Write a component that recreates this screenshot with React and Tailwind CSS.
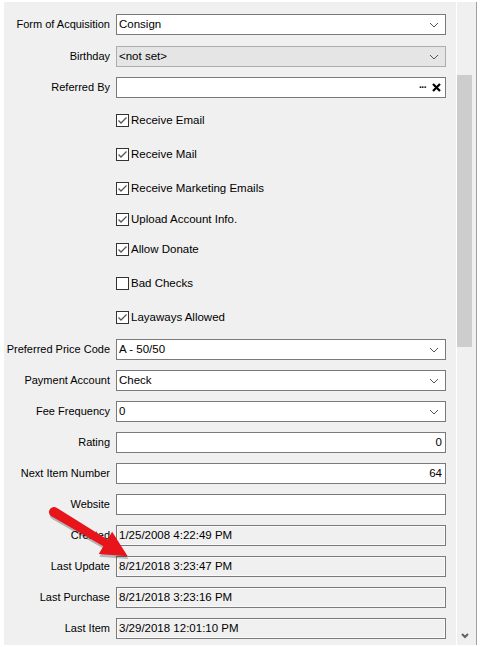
import React from "react";

const font = { fontFamily: '"Liberation Sans", Arial, sans-serif' };

function Chevron() {
  return (
    <svg width="10" height="6" viewBox="0 0 10 6" className="shrink-0">
      <path d="M1 1 L5 5 L9 1" fill="none" stroke="#555" strokeWidth="1" />
    </svg>
  );
}

function Label({ children }) {
  return (
    <div className="w-[107px] shrink-0 pr-[1px] text-right text-[11px] text-black leading-none whitespace-nowrap">
      {children}
    </div>
  );
}

function Row({ label, mt, children }) {
  return (
    <div className={`flex items-center h-[21px] gap-[5px] ${mt}`}>
      <Label>{label}</Label>
      {children}
    </div>
  );
}

function Select({ value, disabled }) {
  return (
    <div
      className={
        disabled
          ? "w-[330px] h-[21px] flex items-center justify-between pl-[2px] pr-[6px] border border-[#adadad] bg-[#e5e5e5] text-[11.5px] text-black"
          : "w-[330px] h-[21px] flex items-center justify-between pl-[2px] pr-[6px] border border-[#7a7a7a] bg-white text-[11.5px] text-black"
      }
    >
      <span>{value}</span>
      <Chevron />
    </div>
  );
}

function TextBox({ value, right, readOnly }) {
  return (
    <div
      className={
        readOnly
          ? "w-[330px] h-[21px] flex items-center px-[2px] border border-[#7a7a7a] bg-[#f0f0f0] shadow-[inset_0_0_0_1px_#fafafa] text-[11.5px] text-black"
          : `w-[330px] h-[21px] flex items-center px-[3px] border border-[#7a7a7a] bg-white text-[11.5px] text-black ${right ? "justify-end" : ""}`
      }
    >
      {value}
    </div>
  );
}

function Check({ label, checked, mt }) {
  return (
    <div className={`flex items-center h-[13px] pl-[112px] ${mt}`}>
      <div className="w-[13px] h-[13px] border border-[#333] bg-white flex items-center justify-center">
        {checked && (
          <svg width="11" height="11" viewBox="0 0 11 11">
            <path d="M1.5 5.5 L4 8 L9.5 2.5" fill="none" stroke="#555" strokeWidth="1.3" />
          </svg>
        )}
      </div>
      <span className="ml-[2px] text-[11.5px] text-black leading-none">{label}</span>
    </div>
  );
}

const arrow =
  "M0 -5 L60 -4 L60 -13 L86 0 L60 13 L60 4 L0 5 A5 5 0 0 1 0 -5 Z";

export default function App() {
  return (
    <div className="w-[480px] h-[647px] bg-white pt-[2px] pl-[4px] overflow-hidden" style={font}>
      <div className="w-[473px] h-[643px] bg-[#f0f0f0] flex relative">
        <div className="flex-1 flex flex-col pt-[12px]">
          <Row label="Form of Acquisition" mt="">
            <Select value="Consign" />
          </Row>
          <Row label="Birthday" mt="mt-[11px]">
            <Select value="<not set>" disabled />
          </Row>
          <Row label="Referred By" mt="mt-[10px]">
            <div className="w-[330px] h-[21px] flex items-center justify-end pr-[4px] gap-[6px] border border-[#7a7a7a] bg-white">
              <span className="text-[10px] font-bold leading-none text-black tracking-[-1px]">···</span>
              <svg width="9" height="9" viewBox="0 0 9 9">
                <path d="M1 1 L8 8 M8 1 L1 8" stroke="#000" strokeWidth="2.2" />
              </svg>
            </div>
          </Row>

          <Check label="Receive Email" checked mt="mt-[16px]" />
          <Check label="Receive Mail" checked mt="mt-[21px]" />
          <Check label="Receive Marketing Emails" checked mt="mt-[21px]" />
          <Check label="Upload Account Info." checked mt="mt-[18px]" />
          <Check label="Allow Donate" checked mt="mt-[17px]" />
          <Check label="Bad Checks" mt="mt-[21px]" />
          <Check label="Layaways Allowed" checked mt="mt-[21px]" />

          <Row label="Preferred Price Code" mt="mt-[15px]">
            <Select value="A - 50/50" />
          </Row>
          <Row label="Payment Account" mt="mt-[10px]">
            <Select value="Check" />
          </Row>
          <Row label="Fee Frequency" mt="mt-[10px]">
            <Select value="0" />
          </Row>
          <Row label="Rating" mt="mt-[10px]">
            <TextBox value="0" right />
          </Row>
          <Row label="Next Item Number" mt="mt-[10px]">
            <TextBox value="64" right />
          </Row>
          <Row label="Website" mt="mt-[10px]">
            <TextBox value="" />
          </Row>
          <Row label="Created" mt="mt-[10px]">
            <TextBox value="1/25/2008 4:22:49 PM" readOnly />
          </Row>
          <Row label="Last Update" mt="mt-[10px]">
            <TextBox value="8/21/2018 3:23:47 PM" readOnly />
          </Row>
          <Row label="Last Purchase" mt="mt-[10px]">
            <TextBox value="8/21/2018 3:23:16 PM" readOnly />
          </Row>
          <Row label="Last Item" mt="mt-[10px]">
            <TextBox value="3/29/2018 12:01:10 PM" readOnly />
          </Row>
        </div>

        {/* scrollbar */}
        <div className="w-[21px] h-full border-l border-white border-r border-r-[#a0a0a0] bg-[#f0f0f0] flex flex-col">
          <div className="mt-[73px] h-[272px] w-[15px] bg-[#cdcdcd]" />
          <div className="flex-1" />
          <div className="h-[12px] flex items-start justify-center pr-[3px]">
            <svg width="8" height="6" viewBox="0 0 8 6">
              <path d="M1 1 L4 4 L7 1" fill="none" stroke="#606060" strokeWidth="2" />
            </svg>
          </div>
        </div>

        {/* red arrow overlay */}
        <svg className="absolute left-0 top-0 pointer-events-none" width="473" height="643">
          <g transform="translate(50,510) rotate(31)">
            <g transform="translate(2,2)" fill="#000" opacity="0.25">
              <path d={arrow} />
            </g>
            <path d={arrow} fill="#e8141b" />
          </g>
        </svg>
      </div>
    </div>
  );
}
